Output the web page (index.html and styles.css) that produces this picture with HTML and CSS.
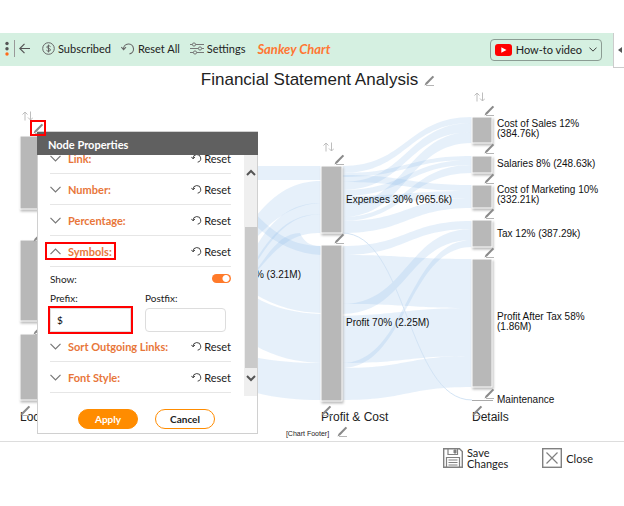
FILE: index.html
```html
<!DOCTYPE html>
<html lang="en">
<head>
<meta charset="utf-8">
<title>Sankey Chart</title>
<link rel="stylesheet" href="styles.css">
</head>
<body>

<svg class="defs" aria-hidden="true">
    <symbol id="pencil" viewBox="0 0 11 11">
        <path d="M0.5 10.5L1.6 7.8L8.6 0.8L10.2 2L3.2 9.2Z" fill="#8a8a8a" />
        <path d="M2 10.5H10" stroke="#b5b5b5" />
    </symbol>
    <symbol id="sort" viewBox="0 0 11 10">
        <path d="M3 9.5V1M0.5 3.5L3 1L5.5 3.5M8.5 0.5V9M6 6.5L8.5 9L11 6.5" fill="none" stroke="#bdbdbd" />
    </symbol>
    <symbol id="reset" viewBox="0 0 14 13">
        <path d="M2.5 7A5 5 0 1 1 8.5 11.9M0.3 5L2.6 7.6L5 5.2" fill="none" stroke="currentColor" stroke-width="1.1" />
    </symbol>
    <symbol id="chevron" viewBox="0 0 11 7">
        <path d="M0.5 0.8L5.5 5.8L10.5 0.8" fill="none" stroke="currentColor" stroke-width="1.2" />
    </symbol>
</svg>

<header class="topbar">
    <nav class="toolbar">
        <svg class="dots" width="4" height="16" viewBox="0 0 4 16">
            <circle cx="2" cy="2.5" r="1.7" fill="#555" />
            <circle cx="2" cy="7.7" r="1.7" fill="#555" />
            <circle cx="2" cy="13" r="1.7" fill="#ff6b1a" />
        </svg>
        <button class="tool back" aria-label="Back">
            <svg width="11" height="11" viewBox="0 0 11 11"><path d="M11 5.5H1M5.5 0.8L0.8 5.5L5.5 10.2" fill="none" stroke="#555" stroke-width="1.2" /></svg>
        </button>
        <button class="tool">
            <svg width="13" height="13" viewBox="0 0 13 13" fill="none" stroke="#666"><circle cx="6.5" cy="6.5" r="5.8" /><path d="M8.5 4.6C7.8 3.5 4.8 3.5 4.8 5.1C4.8 6.8 8.5 6 8.5 7.9C8.5 9.5 5.2 9.5 4.5 8.3M6.5 2.6V10.4" /></svg>
            Subscribed
        </button>
        <button class="tool">
            <svg class="gray" width="14" height="13"><use href="#reset" /></svg>
            Reset All
        </button>
        <button class="tool">
            <svg width="14" height="13" viewBox="0 0 14 13" fill="#d5f0e1" stroke="#777"><path d="M0 2.5H14M0 6.5H14M0 10.5H14" /><circle cx="4" cy="2.5" r="1.6" /><circle cx="10" cy="6.5" r="1.6" /><circle cx="5" cy="10.5" r="1.6" /></svg>
            Settings
        </button>
        <span class="chart-type">Sankey Chart</span>
        <button class="howto">
            <svg width="17" height="12" viewBox="0 0 17 12"><rect width="17" height="12" rx="3" fill="#f00" /><path d="M6.3 3.2L11.5 6L6.3 8.8Z" fill="#fff" /></svg>
            How-to video
            <svg class="caret" width="8" height="5"><use href="#chevron" /></svg>
        </button>
    </nav>
    <button class="side-tab" aria-label="Expand panel">
        <svg width="4" height="6" viewBox="0 0 4 6"><path d="M4 0V6L0 3Z" fill="#555" /></svg>
    </button>
</header>

<main class="chart-area">
    <div class="chart-title">
        <h1>Financial Statement Analysis</h1>
        <button class="edit" aria-label="Edit title"><svg width="11" height="11"><use href="#pencil" /></svg></button>
    </div>

    <svg class="sankey" viewBox="0 92 624 334">
        <g class="links">
            <!-- income to expenses -->
            <path d="M240 166H321V180H240Z" />
            <path d="M240 238C268 196 290 181 321 181V203C298 204 272 214 240 258Z" />
            <path d="M240 280C266 216 292 203 321 203V214C292 216 276 226 240 290Z" />
            <path d="M240 290C270 226 294 214 321 214V233C292 233 276 244 240 294Z" />
            <!-- income to profit -->
            <path d="M240 196C266 228 288 246 321 246V255C294 254 266 240 240 210Z" />
            <path d="M240 293C264 262 276 233 300 233C304 242 310 246 321 246V313C294 313 266 304 240 284Z" />
            <path d="M240 286C262 306 292 313 321 314V363C292 362 268 356 240 336Z" />
            <path d="M240 354C262 360 290 363 321 363V400C296 400 270 398 240 388Z" />
            <!-- expenses to details -->
            <path d="M342 166C407 166 407 117 472 117V123C407 123 407 173 342 173Z" />
            <path d="M342 182C407 182 407 123 472 123V132C407 132 407 190 342 190Z" />
            <path d="M342 204C407 204 407 132 472 132V143C407 143 407 217 342 217Z" />
            <path d="M342 173C407 173 407 156 472 156V160C407 160 407 177 342 177Z" />
            <path d="M342 190C407 190 407 160 472 160V165C407 165 407 196 342 196Z" />
            <path d="M342 217C407 217 407 165 472 165V173C407 173 407 221 342 221Z" />
            <path d="M342 175C407 175 407 185 472 185V191C407 191 407 182 342 182Z" />
            <path d="M342 196C407 196 407 191 472 191V198C407 198 407 204 342 204Z" />
            <path d="M342 221C407 221 407 198 472 198V208C407 208 407 233 342 233Z" />
            <!-- profit to details -->
            <path d="M342 246C407 246 407 221 472 221V229C407 229 407 255 342 255Z" />
            <path d="M342 304C407 304 407 229 472 229V240C407 240 407 314 342 314Z" />
            <path d="M342 363C407 363 407 240 472 240V247C407 247 407 368 342 368Z" />
            <path d="M342 255C407 255 407 259 472 259V308C407 308 407 304 342 304Z" />
            <path d="M342 316C407 314 407 308 472 308V356C407 356 407 363 342 363Z" />
            <path d="M342 368C407 368 407 356 472 356V387C407 387 407 400 342 400Z" />
        </g>
        <path class="thin-link" d="M342 233C407 233 407 400 472 400" />

        <g class="nodes">
            <rect x="20" y="136" width="21" height="73" />
            <rect x="20" y="240" width="21" height="81" />
            <rect x="20" y="334" width="21" height="66" />
            <rect x="321" y="166" width="21" height="67" />
            <rect x="321" y="245" width="21" height="156" />
            <rect x="472" y="117" width="20" height="26" />
            <rect x="472" y="156" width="20" height="17" />
            <rect x="472" y="185" width="20" height="23" />
            <rect x="472" y="220" width="20" height="27" />
            <rect x="472" y="259" width="20" height="128" />
        </g>
        <path d="M472 400.5H493" stroke="#aaa" />

        <g class="labels">
            <text x="301" y="278" text-anchor="end">% (3.21M)</text>
            <text x="346" y="203">Expenses 30% (965.6k)</text>
            <text x="346" y="326">Profit 70% (2.25M)</text>
            <text x="497" y="127">Cost of Sales 12%</text>
            <text x="497" y="137">(384.76k)</text>
            <text x="497" y="167">Salaries 8% (248.63k)</text>
            <text x="497" y="193">Cost of Marketing 10%</text>
            <text x="497" y="203">(332.21k)</text>
            <text x="497" y="237">Tax 12% (387.29k)</text>
            <text x="497" y="320">Profit After Tax 58%</text>
            <text x="497" y="330">(1.86M)</text>
            <text x="497" y="403">Maintenance</text>
        </g>
        <g class="columns">
            <text x="20" y="421">Loc</text>
            <text x="321" y="421">Profit &amp; Cost</text>
            <text x="472" y="421">Details</text>
        </g>

        <use href="#sort" x="22" y="111" width="11" height="10" />
        <use href="#sort" x="323" y="142" width="11" height="10" />
        <use href="#sort" x="474" y="92" width="11" height="10" />
        <use href="#pencil" x="33" y="123" width="11" height="11" />
        <use href="#pencil" x="33" y="231" width="11" height="11" />
        <use href="#pencil" x="33" y="324" width="11" height="11" />
        <use href="#pencil" x="20" y="405" width="11" height="11" />
        <use href="#pencil" x="334" y="154" width="11" height="11" />
        <use href="#pencil" x="334" y="233" width="11" height="11" />
        <use href="#pencil" x="321" y="405" width="11" height="11" />
        <use href="#pencil" x="484" y="105" width="11" height="11" />
        <use href="#pencil" x="484" y="143" width="11" height="11" />
        <use href="#pencil" x="484" y="173" width="11" height="11" />
        <use href="#pencil" x="484" y="208" width="11" height="11" />
        <use href="#pencil" x="484" y="247" width="11" height="11" />
        <use href="#pencil" x="484" y="388" width="11" height="11" />
        <use href="#pencil" x="472" y="405" width="11" height="11" />
    </svg>

    <div class="chart-footer">
        <span>[Chart Footer]</span>
        <button class="edit" aria-label="Edit footer"><svg width="11" height="11"><use href="#pencil" /></svg></button>
    </div>

    <section class="dialog" aria-label="Node Properties">
        <h2>Node Properties</h2>
        <div class="dialog-body">
            <div class="options">
                <div class="option">
                    <button class="toggle"><svg width="11" height="7"><use href="#chevron" /></svg>Link:</button>
                    <button class="reset"><svg width="11" height="10"><use href="#reset" /></svg>Reset</button>
                </div>
                <div class="option">
                    <button class="toggle"><svg width="11" height="7"><use href="#chevron" /></svg>Number:</button>
                    <button class="reset"><svg width="11" height="10"><use href="#reset" /></svg>Reset</button>
                </div>
                <div class="option">
                    <button class="toggle"><svg width="11" height="7"><use href="#chevron" /></svg>Percentage:</button>
                    <button class="reset"><svg width="11" height="10"><use href="#reset" /></svg>Reset</button>
                </div>
                <div class="option">
                    <button class="toggle open marked"><svg width="11" height="7"><use href="#chevron" /></svg>Symbols:</button>
                    <button class="reset"><svg width="11" height="10"><use href="#reset" /></svg>Reset</button>
                </div>
                <div class="symbols">
                    <div class="show">
                        <label for="show">Show:</label>
                        <input type="checkbox" id="show" class="switch" checked>
                    </div>
                    <div class="fields">
                        <div class="field">
                            <label for="prefix">Prefix:</label>
                            <input type="text" id="prefix" class="marked" value="$">
                        </div>
                        <div class="field">
                            <label for="postfix">Postfix:</label>
                            <input type="text" id="postfix">
                        </div>
                    </div>
                </div>
                <div class="option">
                    <button class="toggle"><svg width="11" height="7"><use href="#chevron" /></svg>Sort Outgoing Links:</button>
                    <button class="reset"><svg width="11" height="10"><use href="#reset" /></svg>Reset</button>
                </div>
                <div class="option">
                    <button class="toggle"><svg width="11" height="7"><use href="#chevron" /></svg>Font Style:</button>
                    <button class="reset"><svg width="11" height="10"><use href="#reset" /></svg>Reset</button>
                </div>
            </div>
            <div class="scrollbar">
                <svg class="up" width="10" height="7" viewBox="0 0 10 7"><path d="M1 6L5 2L9 6" fill="none" stroke="#555" stroke-width="2" /></svg>
                <div class="thumb"></div>
                <svg class="down" width="10" height="7" viewBox="0 0 10 7"><path d="M1 1L5 5L9 1" fill="none" stroke="#555" stroke-width="2" /></svg>
            </div>
        </div>
        <div class="dialog-actions">
            <button class="pill apply">Apply</button>
            <button class="pill cancel">Cancel</button>
        </div>
    </section>
    <span class="edit-mark"></span>
</main>

<footer class="actions">
    <button class="action">
        <svg width="20" height="20" viewBox="0 0 20 20" fill="none" stroke="#808080"><path d="M0.7 0.7H16.5L19.3 3.5V19.3H0.7Z" stroke-width="1.4" /><path d="M5 1V6.5H14.5V1M3.5 19V9.5H16.5V19M5.5 12H14.5M5.5 14.5H14.5M5.5 17H14.5" stroke-width="1.2" /><path d="M11 2H13V5H11Z" fill="#808080" /></svg>
        <span>Save<br>Changes</span>
    </button>
    <button class="action">
        <svg width="20" height="20" viewBox="0 0 20 20" fill="none" stroke="#808080"><rect x="0.7" y="0.7" width="18.6" height="18.6" stroke-width="1.4" /><path d="M4.5 4.5L15.5 15.5M15.5 4.5L4.5 15.5" stroke-width="1.2" /></svg>
        <span>Close</span>
    </button>
</footer>

</body>
</html>
```

FILE: styles.css
```css
* {
    box-sizing: border-box;
}

body {
    margin: 0;
    padding-top: 33px;
    background: #fff;
    color: #222;
    font-family: Lato, Carlito, sans-serif;
    font-size: 11px;
}

button {
    margin: 0;
    padding: 0;
    border: 0;
    background: none;
    color: inherit;
    font: inherit;
}

svg {
    display: block;
    flex: none;
}

.defs {
    position: absolute;
    width: 0;
    height: 0;
}

/* top bar */

.topbar {
    display: flex;
    align-items: flex-start;
}

.toolbar {
    flex: 1;
    display: flex;
    align-items: center;
    height: 33px;
    padding: 0 11px 2px 5px;
    background: #d5f0e1;
}

.tool {
    display: flex;
    align-items: center;
    gap: 3px;
    margin-right: 10px;
    white-space: nowrap;
}

.back {
    height: 17px;
    margin-left: 5px;
    margin-right: 12px;
    padding-left: 4px;
    border-left: 1px solid #999;
}

.gray {
    color: #666;
}

.chart-type {
    margin-left: 2px;
    color: #ff7733;
    font-size: 13px;
    font-weight: bold;
    font-style: italic;
}

.howto {
    display: flex;
    align-items: center;
    gap: 4px;
    height: 22px;
    margin: 2px 0 0 auto;
    padding: 0 4px;
    border: 1px solid #8b9c93;
    border-radius: 4px;
}

.caret {
    margin-left: 3px;
}

.side-tab {
    display: flex;
    align-items: center;
    justify-content: flex-end;
    width: 11px;
    height: 35px;
    padding-right: 2px;
    border: solid #ccc;
    border-width: 0 0 1px 1px;
}

/* chart */

.chart-area {
    position: relative;
    border-bottom: 1px solid #ddd;
    font-family: "Liberation Sans", Arial, sans-serif;
}

.chart-title {
    display: flex;
    align-items: center;
    justify-content: center;
    gap: 6px;
    height: 24px;
    padding-left: 12px;
}

.chart-title h1 {
    margin: 0;
    font-size: 17px;
    font-weight: normal;
}

.sankey {
    width: 100%;
    height: auto;
}

.links {
    fill: #8fbce8;
    fill-opacity: 0.22;
}

.thin-link {
    fill: none;
    stroke: #d3e4f5;
}

.nodes {
    fill: #b8b8b8;
    stroke: #fff;
    filter: drop-shadow(1px 2px 1px #bbb);
}

.labels {
    font-size: 10px;
    fill: #111;
}

.columns {
    font-size: 12px;
    fill: #222;
}

.chart-footer {
    display: flex;
    align-items: center;
    justify-content: center;
    gap: 8px;
    height: 15px;
    padding-left: 10px;
    font-size: 7px;
}

.chart-footer .edit {
    margin-bottom: 4px;
}

/* red outlines */

.marked {
    outline: 2px solid #f00;
}

.edit-mark {
    position: absolute;
    left: 30px;
    top: 52px;
    width: 16px;
    height: 16px;
    border: 2px solid #f00;
}

/* dialog */

.dialog {
    position: absolute;
    left: 37px;
    top: 63px;
    width: 221px;
    border: 1px solid #d0d0d0;
    background: #fff;
    font-family: Lato, Carlito, sans-serif;
}

.dialog h2 {
    height: 23px;
    margin: 0 -1px;
    padding-left: 11px;
    background: #606060;
    color: #fff;
    font-size: 11px;
    line-height: 25px;
}

.dialog-body {
    display: flex;
    height: 241px;
    overflow: hidden;
}

.options {
    flex: 1;
    margin-top: -12px;
    padding: 0 13px 0 12px;
}

.option {
    display: flex;
    align-items: center;
    justify-content: space-between;
    height: 31px;
    border-bottom: 1px solid #e6e6e6;
}

.toggle {
    display: flex;
    align-items: center;
    gap: 7px;
    height: 14px;
    margin-left: -3px;
    padding: 0 2px 0 3px;
    color: #e8763a;
    font-weight: bold;
}

.toggle svg {
    color: #777;
}

.open svg {
    transform: rotate(180deg);
}

.reset {
    display: flex;
    align-items: center;
    gap: 2px;
}

.symbols {
    height: 64px;
}

.show {
    display: flex;
    align-items: center;
    justify-content: space-between;
    height: 23px;
    font-size: 10px;
}

.switch {
    appearance: none;
    width: 19px;
    height: 9px;
    margin: 0;
    border-radius: 5px;
    background: radial-gradient(circle at 14px 50%, #fff 3px, #ff7a2a 4px);
}

.fields {
    display: flex;
    gap: 14px;
    font-size: 10px;
}

.field label {
    display: block;
    height: 18px;
    line-height: 16px;
}

.field input {
    display: block;
    width: 81px;
    height: 24px;
    padding: 0 6px;
    border: 1px solid #ddd;
    border-radius: 4px;
    font: inherit;
}

.field .marked {
    border-radius: 0;
}

.scrollbar {
    display: flex;
    flex-direction: column;
    align-items: center;
    width: 13px;
    padding: 14px 0;
    background: #efefef;
}

.thumb {
    flex: 1;
    width: 12px;
    margin: 51px 0 7px;
    background: #cacaca;
}

.dialog-actions {
    display: flex;
    justify-content: center;
    gap: 17px;
    padding: 13px 2px 4px 0;
}

.pill {
    width: 60px;
    height: 20px;
    border: 1px solid #ff8c00;
    border-radius: 10px;
    font-size: 10px;
    font-weight: bold;
}

.apply {
    background: #ff8c00;
    color: #fff;
}

/* bottom bar */

.actions {
    display: flex;
    justify-content: flex-end;
    gap: 34px;
    padding: 5px 31px 6px 0;
}

.action {
    display: flex;
    align-items: center;
    gap: 4px;
    line-height: 11px;
    text-align: left;
}
```
